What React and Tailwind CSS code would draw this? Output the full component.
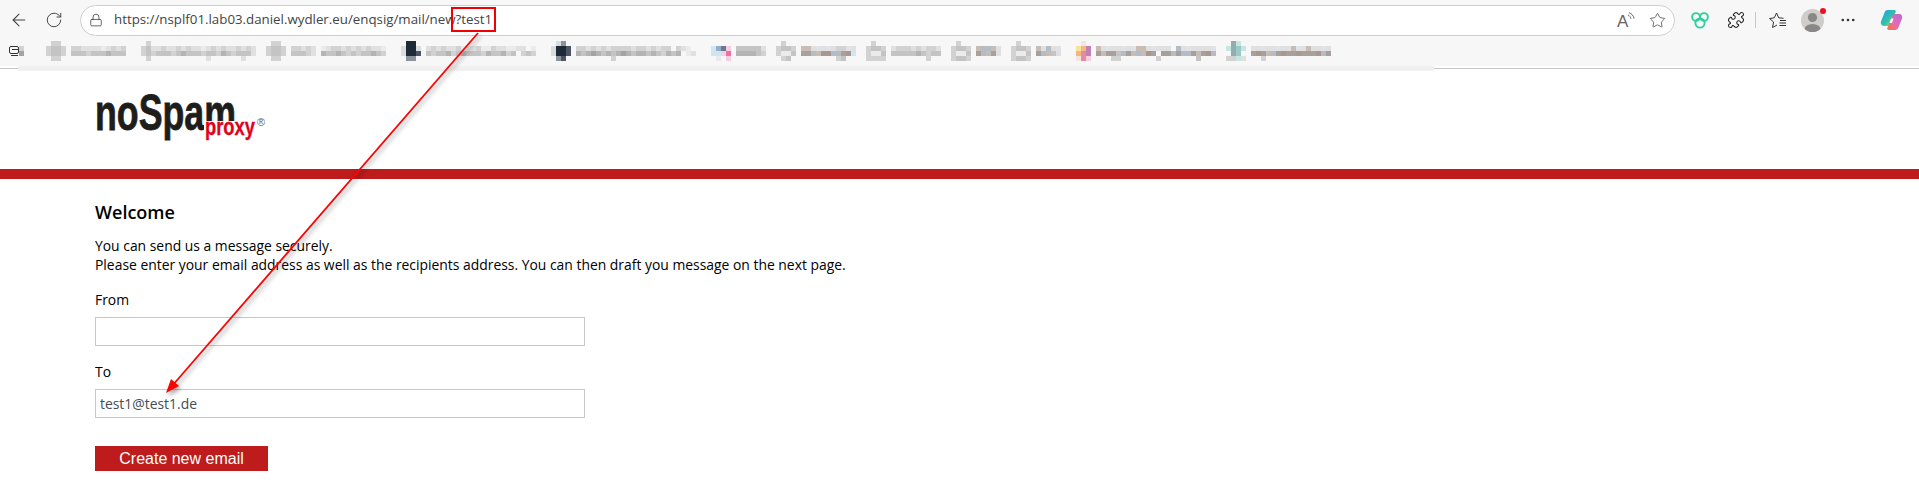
import { ArrowLeft, RotateCw, Lock, Star, Puzzle, MoreHorizontal } from "lucide-react"

const shades = {
    a: "#ebebeb", b: "#e0e0e0", c: "#d2d2d2", d: "#c4c4c4", e: "#b4b4b4", f: "#a4a4a4", g: "#949494",
    k: "#1f2a38", l: "#4b5563", m: "#8b939d", n: "#d9dcdf",
    p: "#f06fa8", q: "#f5cfe0", r: "#8fb0c8", s: "#6e7590", t: "#cfe6f2",
    y: "#f7e2a0", o: "#f4b77f", u: "#e58aa0", v: "#c080b8", w: "#f6e4de",
    x: "#c5e6e1", z: "#9cc9c6", h: "#90aeb0",
    1: "#c8bdb4", 2: "#a8a09c", 3: "#b4bcc6", 4: "#a89890", 5: "#dfe2e6",
}

// blurred bookmarks, one char per 5px tile
const bookmarks = [
    { gap: "ml-[20px]", rows: [".cc.............", "cddc.ccbbbbabcbc", "cddc.dddcdddeddd", ".cc............."] },
    { gap: "ml-[15px]", rows: [".c.....................", "cdbbcbbcbcbbabcbcbbcbcb", "cdcdddcdedddcddcedcdddb", ".c...........b......b.."] },
    { gap: "ml-[10px]", rows: [".cc.....................", "cddc.ccbcb.abccbcbcbcbba", "cddc.dddcb.eddedcdcddedc", ".cc....................."] },
    { gap: "ml-[15px]", rows: [".kk........................", "nkkn.bcbcbbcabbcaacbbaabb.a", "nkkl.dcddecdedddceddecd.cdc", ".mm........................"] },
    { gap: "ml-[15px]", rows: [".nm.........................", "nkkl.ccbcbcbccccbccbcbcc.cba", "nkkl.edefededefedeededcede.ab", ".ml.........c..............."] },
    { gap: "ml-[15px]", rows: ["...........", "trsq.dddddb", "ttqp.eeeedc", ".a.q......."] },
    { gap: "ml-[10px]", rows: [".c..............", "cddc.11b5b5bcc5b", "caad.2231443324t", ".cd.........cd.."] },
    { gap: "ml-[10px]", rows: [".c.............", "cddc.bcccbcbccb", "caad.dddddedcdd", "cccc........c.."] },
    { gap: "ml-[10px]", rows: [".c........", "cddc.1331b", "caad.2312b", "cddc......"] },
    { gap: "ml-[10px]", rows: [".c........", "cddc.1b3b5", "caad.231db", "cddc......"] },
    { gap: "ml-[15px]", rows: [".w.", "yov", "ouv", "wuq"], text: ["1b5bb5b511b5bbb.3b5bbbb5", "2122d3213142.22323321243", "...cc.......c.......d..."] },
    { gap: "ml-[10px]", rows: [".hx.", "xhzx", ".hz.", "ccxb"], text: ["bb5bb5bb15b1bb5b", "2421324224222432", "..c............."] },
]

const Tiles = ({ rows }) => {
    const cols = Math.max(...rows.map((r) => r.length))
    return (
        <svg width={cols * 5} height={rows.length * 5} className="block shrink-0">
            {rows.map((row, y) =>
                row.split("").map((ch, x) =>
                    shades[ch] ? <rect key={x} x={x * 5} y={y * 5} width="5" height="5" fill={shades[ch]} /> : null
                )
            )}
        </svg>
    )
}

const BookmarkBlur = ({ item }) => {
    if (!item.text) return <div className={item.gap}><Tiles rows={item.rows} /></div>
    return (
        <div className={`${item.gap} flex items-start gap-[5px]`}>
            <Tiles rows={item.rows} />
            <div className="pt-[5px]"><Tiles rows={item.text} /></div>
        </div>
    )
}

const ReadAloud = () => (
    <svg width="18" height="18" viewBox="0 0 18 18" fill="none" stroke="#666" strokeWidth="1">
        <text x="0" y="16" fontSize="17" fontFamily="'Liberation Sans', sans-serif" fill="#666" stroke="none">A</text>
        <path d="M11 4c1.6.6 2.6 2 2.8 3.6" />
        <path d="M12 1.6c2.8 1 4.6 3.2 5 6" />
    </svg>
)

const Favorites = () => (
    <svg width="18" height="18" viewBox="0 0 18 18" fill="none" stroke="#333" strokeWidth="1" strokeLinejoin="round">
        <path d="M9 14 4.5 16.5 5.6 11 1.5 7.5 6.3 6.8 8.5 2 10.7 6.8 15.5 7.3" />
        <path d="M12 9.5H18M11.5 12H18M11.5 14.5H18" />
    </svg>
)

const CircleTrio = () => (
    <svg width="18" height="18" viewBox="0 0 18 18" fill="none" stroke="#2fcf9c" strokeWidth="1.9">
        <circle cx="5" cy="6" r="3.9" />
        <circle cx="13" cy="6" r="3.9" />
        <circle cx="9" cy="12" r="4.6" />
    </svg>
)

const Avatar = () => (
    <div className="relative w-[23px] h-[23px]">
        <svg width="23" height="23" viewBox="0 0 23 23">
            <clipPath id="avatarClip"><circle cx="11.5" cy="11.5" r="11.5" /></clipPath>
            <circle cx="11.5" cy="11.5" r="11.5" fill="#cfcdca" />
            <circle cx="11.5" cy="8.5" r="4.6" fill="#8a8886" />
            <ellipse cx="11.5" cy="20.5" rx="8" ry="5.5" fill="#8a8886" clipPath="url(#avatarClip)" />
        </svg>
        <div className="absolute right-[-2px] top-[-1px] w-[6px] h-[6px] rounded-full bg-[#e81123]" />
    </div>
)

const Copilot = () => (
    <svg width="23" height="22" viewBox="0 0 23 22">
        <defs>
            <linearGradient id="copA" x1="0" y1="0" x2="1" y2="1">
                <stop offset="0" stopColor="#1e9bf0" />
                <stop offset="0.55" stopColor="#2fc4a8" />
                <stop offset="1" stopColor="#e8d43a" />
            </linearGradient>
            <linearGradient id="copB" x1="1" y1="0" x2="0" y2="1">
                <stop offset="0" stopColor="#b06ae0" />
                <stop offset="0.55" stopColor="#e86ab0" />
                <stop offset="1" stopColor="#f5743a" />
            </linearGradient>
        </defs>
        <path d="M8 1h6c1 0 1.6.5 1.9 1.4L11 14c-.6 2-1.4 3-3.4 3H4C1.6 17 .3 15 1 12.6L4.6 3.4C5.2 1.8 6.4 1 8 1z" fill="url(#copA)" />
        <path d="M15 5h4c2.4 0 3.7 2 3 4.4l-3.6 9.2c-.6 1.6-1.8 2.4-3.4 2.4H9c-1 0-1.6-.5-1.9-1.4L12 8c.6-2 1-3 3-3z" fill="url(#copB)" />
        <path d="M11 9.5h2.5L12 14H9.5z" fill="#fff" />
    </svg>
)

// the m of the wordmark is cut short to make room for "proxy"
const Logo = () => (
    <svg width="178" height="56" viewBox="0 0 178 56" className="block">
        <clipPath id="logoClip"><path d="M0 0H145V33H109V56H0Z" /></clipPath>
        <g clipPath="url(#logoClip)">
            <text x="0" y="42" fontSize="50" fontWeight="700" fontFamily="'Liberation Sans', sans-serif" fill="#1d1d1b" stroke="#1d1d1b" strokeWidth="0.8" textLength="141" lengthAdjust="spacingAndGlyphs">noSpam</text>
        </g>
        <text x="110" y="47" fontSize="23" fontWeight="700" fontFamily="'Liberation Sans', sans-serif" fill="#e2001a" stroke="#e2001a" strokeWidth="0.3" textLength="50" lengthAdjust="spacingAndGlyphs">proxy</text>
        <text x="162" y="38" fontSize="11" fontFamily="'Liberation Sans', sans-serif" fill="#666">®</text>
    </svg>
)

const Field = ({ label, value, className }) => (
    <div className={className}>
        <label className="block text-[13.9px] leading-[19px] text-black">{label}</label>
        <input
            type="text"
            readOnly
            value={value}
            className="mt-[8px] block w-[490px] h-[29px] bg-white border border-[#c8c8c8] px-[4px] text-[13.9px] text-[#444c56] outline-none"
        />
    </div>
)

const App = () => {
    return (
        <div className="relative w-full h-[480px] overflow-hidden bg-white font-['Open_Sans',sans-serif]">
            {/* browser chrome */}
            <div className="h-[66px] bg-[#f7f7f7]">
                <div className="h-[36px] pt-[4px] flex items-center">
                    <div className="w-[80px] shrink-0 flex items-center pl-[9px] gap-[16px]">
                        <ArrowLeft className="w-[20px] h-[20px] text-[#444]" strokeWidth={1.3} />
                        <RotateCw className="w-[18px] h-[18px] text-[#444]" strokeWidth={1.3} />
                    </div>
                    <div className="w-[1595px] h-[31px] shrink-0 flex items-center bg-white border border-[#cfcfcf] rounded-full pl-[8px] pr-[8px]">
                        <Lock className="w-[14px] h-[14px] text-[#444]" strokeWidth={1.4} />
                        <span className="ml-[11px] text-[13.3px] text-[#444] font-['Open_Sans',sans-serif]">
                            https://nsplf01.lab03.daniel.wydler.eu/enqsig/mail/new?test1
                        </span>
                        <div className="ml-auto flex items-center gap-[14px]">
                            <ReadAloud />
                            <Star className="w-[17px] h-[17px] text-[#555]" strokeWidth={1.2} />
                        </div>
                    </div>
                    <div className="flex-1 flex items-center pl-[16px]">
                        <CircleTrio />
                        <Puzzle className="ml-[18px] w-[18px] h-[18px] text-[#222]" strokeWidth={1.4} />
                        <div className="ml-[10px] w-px h-[16px] bg-[#c8c8c8]" />
                        <div className="ml-[12px]"><Favorites /></div>
                        <div className="ml-[15px]"><Avatar /></div>
                        <MoreHorizontal className="ml-[15px] w-[18px] h-[18px] text-[#333]" strokeWidth={1.6} />
                        <div className="ml-[23px]"><Copilot /></div>
                    </div>
                </div>
                <div className="h-[20px] mt-[5px] pl-[9px] flex items-start">
                    <div className="w-[17px] h-[20px] shrink-0 flex items-center">
                        <svg width="17" height="20" viewBox="0 0 17 20" fill="none">
                            <rect x="0.5" y="5.5" width="9" height="7" rx="1.5" stroke="#333" />
                            <path d="M3 8.5h7M2 14.5h7" stroke="#333" />
                            <rect x="10" y="5" width="5" height="5" fill="#d2d2d2" />
                            <rect x="10" y="10" width="5" height="5" fill="#a4a4a4" />
                        </svg>
                    </div>
                    {bookmarks.map((item, i) => (
                        <BookmarkBlur key={i} item={item} />
                    ))}
                </div>
            </div>
            <div className="h-[5px] flex">
                <div className="w-[18px] pt-[2px]"><div className="h-[1px] bg-[#c8c8c8]" /></div>
                <div className="flex-1 bg-[#f0f0f0]" />
                <div className="w-[485px] pt-[2px]"><div className="h-[1px] bg-[#c8c8c8]" /></div>
            </div>

            {/* page */}
            <div className="h-[98px] pl-[95px] pt-[17px]">
                <Logo />
            </div>
            <div className="h-[10px] bg-[#be1c1c]" />
            <div className="pl-[95px] pt-[21px]">
                <h1 className="text-[18px] leading-[25px] font-semibold text-black">Welcome</h1>
                <p className="mt-[11px] text-[13.9px] leading-[19px] text-black">
                    You can send us a message securely.
                    <br />
                    Please enter your email address as well as the recipients address. You can then draft you message on the next page.
                </p>
                <Field className="mt-[16px]" label="From" value="" />
                <Field className="mt-[16px]" label="To" value="test1@test1.de" />
                <button className="mt-[28px] block w-[173px] h-[25px] bg-[#be1c1c] text-white text-[16px] leading-[25px] font-['Liberation_Sans',sans-serif]">
                    Create new email
                </button>
            </div>

            {/* annotation */}
            <div className="absolute left-[451px] top-[7px] w-[45px] h-[25px] border-2 border-[#f00000]" />
            <svg
                className="absolute left-0 top-0 pointer-events-none drop-shadow-[2px_3px_2px_rgba(0,0,0,0.35)]"
                width="600"
                height="420"
            >
                <line x1="478" y1="33" x2="172" y2="386" stroke="#ff0000" strokeWidth="1.8" />
                <polygon points="166,393 179,386 171,379" fill="#ff0000" />
            </svg>
        </div>
    )
}

export default App
